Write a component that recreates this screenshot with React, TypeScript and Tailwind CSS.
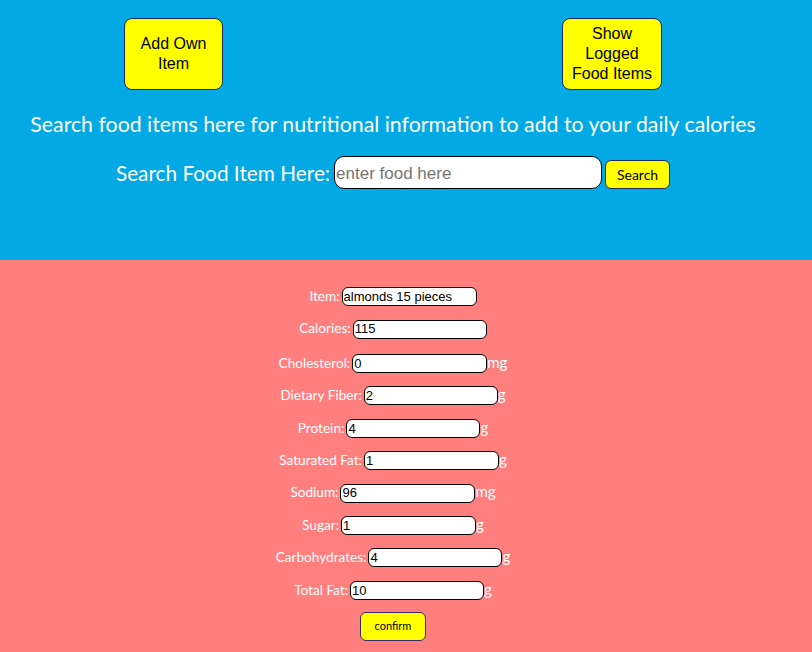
import { useState } from "react";

interface Nutrient {
  label: string;
  value: string;
  unit?: string;
  width: number;
}

const nutrients: Nutrient[] = [
  { label: "Item:", value: "almonds 15 pieces", width: 135 },
  { label: "Calories:", value: "115", width: 134 },
  { label: "Cholesterol:", value: "0", unit: "mg", width: 135 },
  { label: "Dietary Fiber:", value: "2", unit: "g", width: 134 },
  { label: "Protein:", value: "4", unit: "g", width: 134 },
  { label: "Saturated Fat:", value: "1", unit: "g", width: 135 },
  { label: "Sodium:", value: "96", unit: "mg", width: 135 },
  { label: "Sugar:", value: "1", unit: "g", width: 135 },
  { label: "Carbohydrates:", value: "4", unit: "g", width: 134 },
  { label: "Total Fat:", value: "10", unit: "g", width: 134 },
];

function NutrientRow({ item }: { item: Nutrient }) {
  const [value, setValue] = useState(item.value);

  return (
    <div className="flex items-baseline justify-center h-[19px]">
      <label className="text-[13.6px] text-white mr-[2px]">{item.label}</label>
      <input
        value={value}
        onChange={(e) => setValue(e.target.value)}
        style={{ width: item.width }}
        className="h-[19px] bg-white border border-black rounded-[6px] px-[1px] text-[13px] text-black font-['Liberation_Sans',Arial,sans-serif] outline-none"
      />
      {item.unit && <span className="text-[15px] text-white">{item.unit}</span>}
    </div>
  );
}

export default function App() {
  const [query, setQuery] = useState("");

  return (
    <div className="min-h-screen font-['Lato',sans-serif] bg-[#ff7f7f]">
      <section className="bg-[#02a9e4] h-[260px] pt-[18px]">
        <div className="flex">
          <button className="ml-[124px] w-[99px] h-[72px] bg-[#ffff00] border border-[#1f2a5c] rounded-[8px] text-[16px] leading-[20px] text-black font-['Liberation_Sans',Arial,sans-serif]">
            Add Own
            <br />
            Item
          </button>
          <button className="ml-[339px] w-[100px] h-[72px] bg-[#ffff00] border border-[#1f2a5c] rounded-[8px] text-[16px] leading-[20px] text-black font-['Liberation_Sans',Arial,sans-serif]">
            Show
            <br />
            Logged
            <br />
            Food Items
          </button>
        </div>

        <div className="pr-[26px]">
          <h1 className="mt-[20px] text-center text-white text-[21.3px] leading-[28px]">
            Search food items here for nutritional information to add to your daily calories
          </h1>

          <div className="mt-[18px] flex items-center justify-center">
            <span className="text-white text-[20.8px] mr-[4px]">Search Food Item Here:</span>
            <input
              value={query}
              onChange={(e) => setQuery(e.target.value)}
              placeholder="enter food here"
              className="w-[268px] h-[33px] bg-white border border-black rounded-[10px] px-[1px] pt-[2px] text-[17px] text-black placeholder:text-[#757575] font-['Liberation_Sans',Arial,sans-serif] outline-none"
            />
            <button className="ml-[3px] mt-[4px] w-[65px] h-[29px] bg-[#ffff00] border border-[#1f2a5c] rounded-[6px] text-[14px] text-black">
              Search
            </button>
          </div>
        </div>
      </section>

      <section className="pr-[26px] pt-[26px] pb-[12px] flex flex-col items-center">
        <div className="flex flex-col gap-[13.4px] w-full">
          {nutrients.map((n) => (
            <NutrientRow key={n.label} item={n} />
          ))}
        </div>
        <button className="mt-[15px] w-[66px] h-[29px] bg-[#ffff00] border border-[#3b2a6b] rounded-[6px] text-[11px] text-black">
          confirm
        </button>
      </section>
    </div>
  );
}
